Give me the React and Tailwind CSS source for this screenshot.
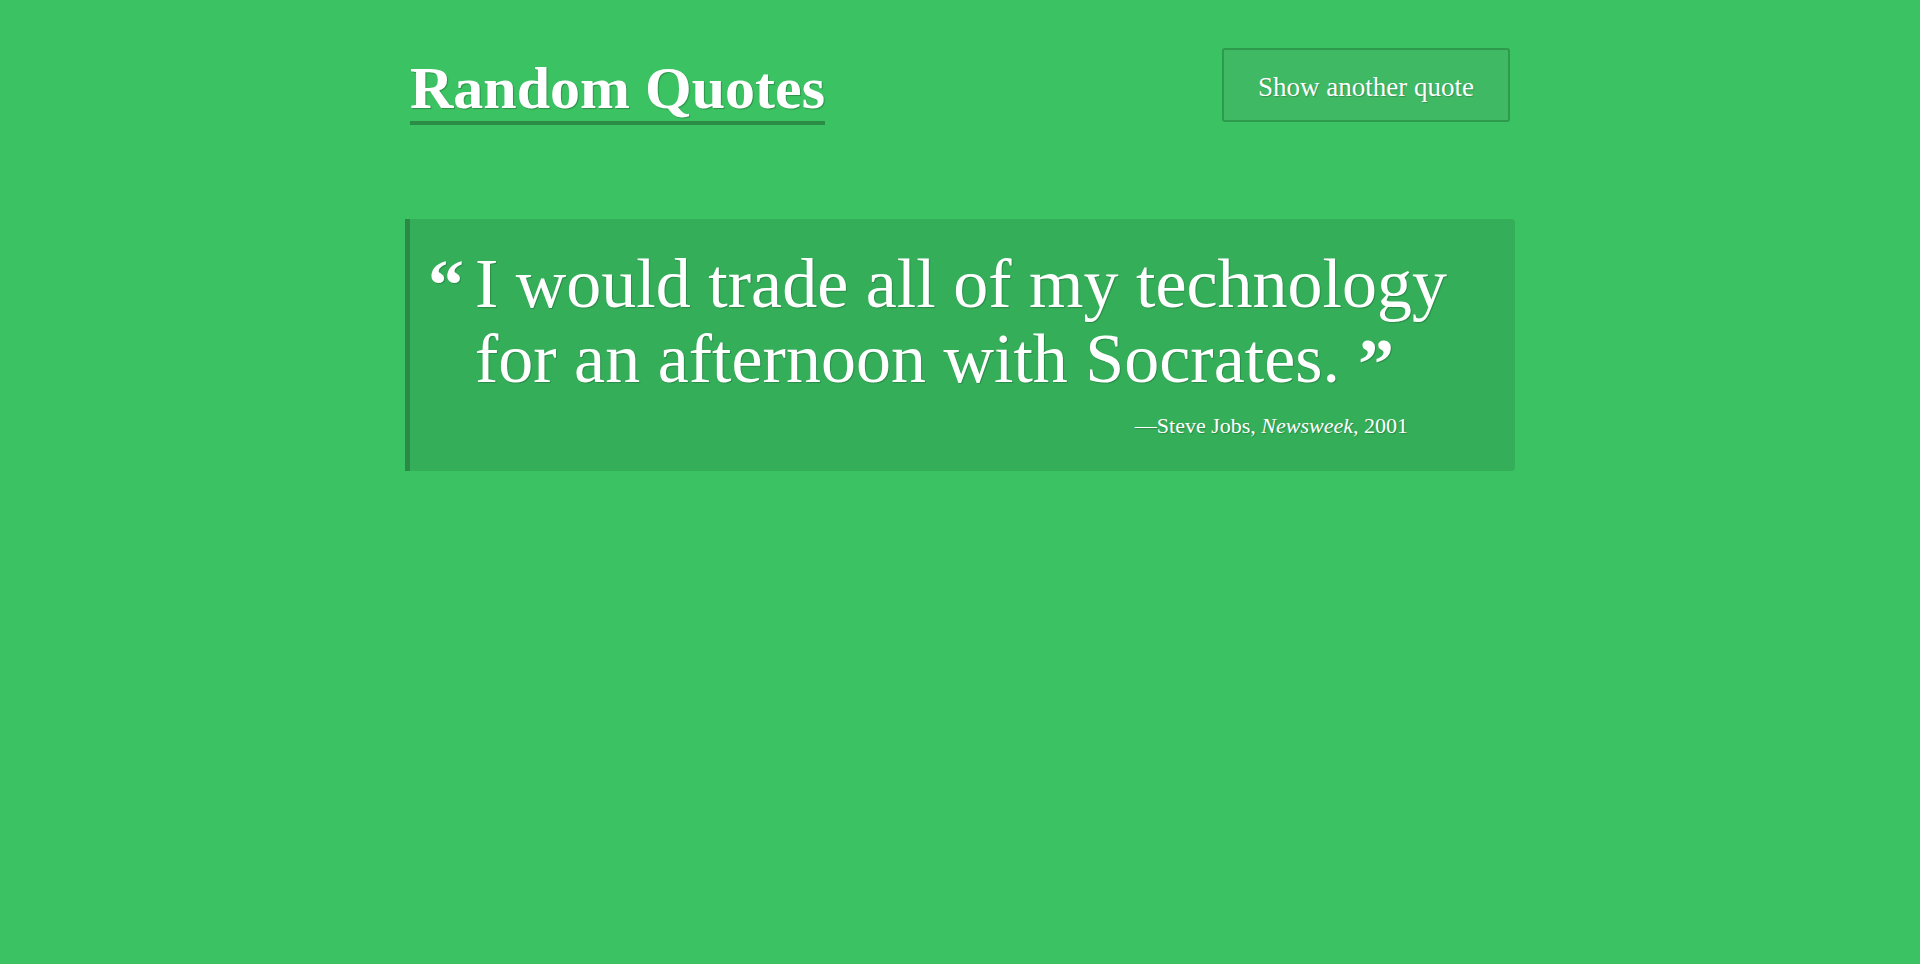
export default function App() {
  const serif = { fontFamily: '"Liberation Serif", "Times New Roman", serif' };
  return (
    <div className="min-h-screen w-full bg-[#3bc262] text-white" style={serif}>
      <div className="mx-auto w-[1100px]">
        <header className="flex items-start justify-between pt-[48px]">
          <h1 className="mt-[10px] border-b-4 border-[#2a8c45] pb-[3px] text-[60px] font-bold leading-[60px] [text-shadow:1px_1px_1px_rgba(0,0,0,0.25)]">
            Random Quotes
          </h1>
          <button className="flex h-[74px] w-[288px] items-center justify-center rounded-[3px] border-2 border-[#2e9a4c] bg-[#40b965] pt-[4px] text-[27px] leading-[27px] text-white [text-shadow:1px_1px_1px_rgba(0,0,0,0.2)]">
            Show another quote
          </button>
        </header>

        <blockquote className="-mx-[5px] mt-[94px] flex flex-col rounded-r-[4px] border-l-[5px] border-[#2a8a45] bg-[#34ae59] pb-[29px] pr-[40px] pt-[27px] [text-shadow:1px_1px_1px_rgba(0,0,0,0.2)]">
          <div className="flex">
            <span className="mt-[3px] block w-[65px] shrink-0 pr-[11px] text-right text-[72px] font-bold leading-[72px]">
              “
            </span>
            <p className="text-[70px] leading-[75px]">
              I would trade all of my technology for an afternoon with Socrates.
              <span className="relative top-[6px] ml-[18px] text-[72px] font-bold leading-none">”</span>
            </p>
          </div>
          <footer className="mr-[67px] mt-[13px] text-right text-[22px] leading-[33px]">
            —Steve Jobs, <cite className="italic">Newsweek</cite>, 2001
          </footer>
        </blockquote>
      </div>
    </div>
  );
}
